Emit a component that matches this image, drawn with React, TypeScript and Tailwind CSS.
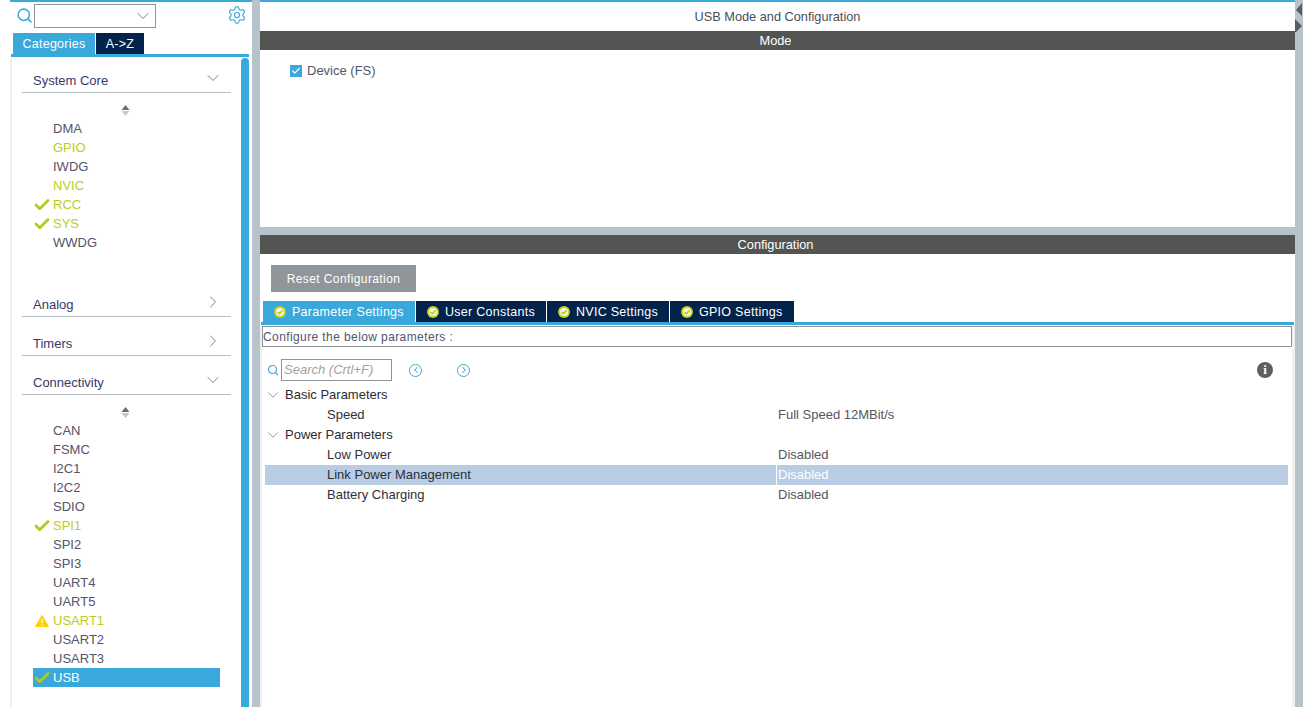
import React from 'react';
import { ChevronDown, ChevronRight, ChevronLeft, Check, Search, Settings } from 'lucide-react';

type Item = { name: string; state?: 'ok' | 'warn'; selected?: boolean };

const coreItems: Item[] = [
  { name: 'DMA' },
  { name: 'GPIO', state: undefined },
  { name: 'IWDG' },
  { name: 'NVIC' },
  { name: 'RCC', state: 'ok' },
  { name: 'SYS', state: 'ok' },
  { name: 'WWDG' },
];

const connItems: Item[] = [
  { name: 'CAN' },
  { name: 'FSMC' },
  { name: 'I2C1' },
  { name: 'I2C2' },
  { name: 'SDIO' },
  { name: 'SPI1', state: 'ok' },
  { name: 'SPI2' },
  { name: 'SPI3' },
  { name: 'UART4' },
  { name: 'UART5' },
  { name: 'USART1', state: 'warn' },
  { name: 'USART2' },
  { name: 'USART3' },
  { name: 'USB', state: 'ok', selected: true },
];

const greenNames = ['GPIO', 'NVIC', 'RCC', 'SYS', 'SPI1', 'USART1'];

const Warn = () => (
  <svg width="14" height="12" viewBox="0 0 15 13">
    <path d="M7.5 0.5 L14.6 12.5 L0.4 12.5 Z" fill="#fdd000" stroke="#fdd000" strokeLinejoin="round" />
    <rect x="6.9" y="4" width="1.3" height="5" fill="#fff" />
    <rect x="6.9" y="10" width="1.3" height="1.3" fill="#fff" />
  </svg>
);

const SortArrows = () => (
  <div className="flex h-[18px] items-center justify-center pr-[13px]">
    <svg width="9" height="11" viewBox="0 0 9 11">
      <path d="M4.5 0 L8.5 5 L0.5 5 Z" fill="#6a6f73" />
      <path d="M4.5 11 L8.5 6 L0.5 6 Z" fill="#c3c7ca" />
    </svg>
  </div>
);

const PeripheralRow = ({ item }: { item: Item }) => {
  const green = greenNames.includes(item.name);
  return (
    <div className={`flex h-[19px] items-center ${item.selected ? 'bg-[#39a9dc] text-white' : green ? 'text-[#bccd22]' : 'text-[#54546a]'}`}>
      <span className="flex w-5 items-center justify-center pr-[3px]">
        {item.state === 'ok' && <Check size={18} strokeWidth={3.6} className="shrink-0 text-[#b5c91c]" />}
        {item.state === 'warn' && <Warn />}
      </span>
      <span className="text-[13px]">{item.name}</span>
    </div>
  );
};

const CategoryHead = ({ title, open, first }: { title: string; open?: boolean; first?: boolean }) => (
  <div className={`flex items-end ${first ? 'h-[36px]' : 'h-[39px]'}`}>
    <div className="flex h-[26px] w-[209px] items-center justify-between border-b border-[#b4bfc6] pl-[11px] pr-[8px] text-[13px] text-[#37396a]">
      <span className="pt-[3px]">{title}</span>
      {open ? (
        <ChevronDown size={20} strokeWidth={1.2} className="mb-[3px] text-[#7a7f84]" />
      ) : (
        <ChevronRight size={20} strokeWidth={1.2} className="mb-[3px] text-[#7a7f84]" />
      )}
    </div>
  </div>
);

const TabIcon = () => (
  <svg width="12" height="12" viewBox="0 0 12 12" className="shrink-0">
    <circle cx="6" cy="6" r="6" fill="#c2d21f" />
    <circle cx="6" cy="6" r="4" fill="#f3f5e2" />
    <path d="M3.6 6 L5.4 7.8 L8.5 4.6" fill="none" stroke="#b3c41a" strokeWidth="1.5" />
  </svg>
);

const tabs = [
  { label: 'Parameter Settings', w: 'w-[152px]', active: true },
  { label: 'User Constants', w: 'w-[130px]' },
  { label: 'NVIC Settings', w: 'w-[122px]' },
  { label: 'GPIO Settings', w: 'w-[124px]' },
];

const TreeGroup = ({ title }: { title: string }) => (
  <div className="flex h-5 items-center text-[#2b2b33]">
    <ChevronDown size={18} strokeWidth={1.1} className="-ml-[1px] mr-[3px] text-[#7a7f84]" />
    <span>{title}</span>
  </div>
);

const TreeRow = ({ name, value, selected }: { name: string; value: string; selected?: boolean }) => (
  <div className={`flex h-5 items-center ${selected ? 'bg-[#b8cde4]' : ''}`}>
    <span className="w-[511px] pl-[62px] text-[#2f2f3a]">{name}</span>
    <span className={`flex h-full items-center pl-[1px] ${selected ? 'border-l border-white text-white' : 'ml-[1px] text-[#55555f]'}`}>{value}</span>
  </div>
);

const CircleArrow = ({ left }: { left?: boolean }) => (
  <span className="flex h-[13px] w-[13px] items-center justify-center rounded-full border-[1.5px] border-[#39a9dc] text-[#39a9dc]">
    {left ? <ChevronLeft size={10} strokeWidth={2.5} /> : <ChevronRight size={10} strokeWidth={2.5} />}
  </span>
);

export default function App() {
  return (
    <div className="flex h-[707px] w-[1315px] overflow-hidden bg-white font-['Liberation_Sans',Arial,sans-serif]">
      {/* left panel */}
      <div className="flex w-[252px] shrink-0 flex-col pl-[10px]">
        <div className="h-[2px] shrink-0 bg-[#39a9dc]" />
        <div className="flex h-[31px] shrink-0 items-start pt-[2px]">
          <Search size={17} strokeWidth={2.2} className="ml-[6px] mt-[3px] shrink-0 text-[#39a9dc]" />
          <div className="ml-[1px] flex h-[24px] w-[122px] shrink-0 items-center justify-end border border-[#8f9396] pr-[2px]">
            <ChevronDown size={20} strokeWidth={1.1} className="text-[#6f7478]" />
          </div>
          <Settings size={20} strokeWidth={1.4} className="ml-[71px] mt-[1px] shrink-0 text-[#39a9dc]" />
        </div>
        <div className="flex h-[21px] shrink-0 pl-[3px] text-[12.5px] tracking-[0.25px] text-white">
          <div className="flex w-[82px] items-center justify-center bg-[#39a9dc] pt-[1px]">Categories</div>
          <div className="ml-[1px] flex w-[48px] items-center justify-center bg-[#03234b] pt-[1px]">A-&gt;Z</div>
        </div>
        <div className="ml-[1px] mr-[3px] h-[3px] shrink-0 bg-[#39a9dc]" />
        <div className="flex min-h-0 flex-1">
          <div className="flex-1 border-l-2 border-[#efefef] pl-[10px]">
            <CategoryHead title="System Core" open first />
            <div className="mt-[8px]"><SortArrows /></div>
            <div className="ml-[11px] mr-[21px]">
              {coreItems.map(i => <PeripheralRow key={i.name} item={i} />)}
            </div>
            <div className="h-[26px]" />
            <CategoryHead title="Analog" />
            <CategoryHead title="Timers" />
            <CategoryHead title="Connectivity" open />
            <div className="mt-[8px]"><SortArrows /></div>
            <div className="ml-[11px] mr-[21px]">
              {connItems.map(i => <PeripheralRow key={i.name} item={i} />)}
            </div>
          </div>
          <div className="mt-[1px] mr-[3px] w-[8px] rounded-t-[4px] bg-[#39a9dc]" />
        </div>
      </div>
      <div className="w-[8px] shrink-0 bg-[#b7c3ca]" />

      {/* main panel */}
      <div className="flex w-[1035px] shrink-0 flex-col">
        <div className="h-[2px] shrink-0 bg-[#39a9dc]" />
        <div className="flex h-[29px] shrink-0 items-center justify-center text-[12.75px] text-[#4d4d55]">USB Mode and Configuration</div>
        <div className="flex h-[19px] shrink-0 items-center justify-center bg-[#535553] pr-[4px] text-[12.75px] text-white">Mode</div>
        <div className="h-[177px] shrink-0 pl-[30px] pt-[11px]">
          <div className="flex items-center text-[13px] text-[#54546a]">
            <span className="flex h-[12px] w-[12px] items-center justify-center bg-[#39a9dc]">
              <Check size={10} strokeWidth={3} className="text-white" />
            </span>
            <span className="ml-[5px]">Device (FS)</span>
          </div>
        </div>
        <div className="h-[8px] shrink-0 bg-[#b7c3ca]" />
        <div className="flex h-[19px] shrink-0 items-center justify-center bg-[#535553] pr-[4px] text-[12.75px] text-white">Configuration</div>
        <div className="flex min-h-0 flex-1 flex-col">
          <div className="ml-[11px] mt-[11px] flex h-[27px] w-[145px] shrink-0 items-center justify-center bg-[#90959a] text-[12px] tracking-[0.4px] text-white">Reset Configuration</div>
          <div className="ml-[3px] mt-[9px] flex h-[21px] shrink-0 gap-[1px] text-[12.5px] tracking-[0.27px] text-white">
            {tabs.map(t => (
              <div key={t.label} className={`flex items-center pl-[11px] ${t.w} ${t.active ? 'bg-[#39a9dc]' : 'bg-[#03234b]'}`}>
                <TabIcon />
                <span className="ml-[6px] pt-[1px]">{t.label}</span>
              </div>
            ))}
          </div>
          <div className="ml-[1px] mr-[1px] h-[3px] shrink-0 bg-[#39a9dc]" />
          <div className="flex min-h-0 flex-1 border-l-2 border-r-[3px] border-[#f0f0f0]">
            <div className="min-w-0 flex-1 text-[13px]">
              <div className="mt-[1px] flex h-[21px] items-center border border-[#8e9599] text-[12px] tracking-[0.4px] text-[#54546a]">Configure the below parameters :</div>
              <div className="mt-[12px] flex h-[22px] items-center">
                <Search size={12} strokeWidth={2.4} className="ml-[5px] text-[#39a9dc]" />
                <div className="ml-[2px] flex h-[22px] w-[111px] items-center border border-[#8e9599] pl-[2px] italic text-[#a2a2a2]">Search (Crtl+F)</div>
                <span className="ml-[17px]"><CircleArrow left /></span>
                <span className="ml-[35px]"><CircleArrow /></span>
                <span className="ml-auto mr-[19px] flex h-4 w-4 items-center justify-center rounded-full bg-[#5f5f5f] font-['Liberation_Serif',serif] text-[13px] font-bold text-white">i</span>
              </div>
              <div className="ml-[3px] mr-[4px] mt-[4px]">
                <TreeGroup title="Basic Parameters" />
                <TreeRow name="Speed" value="Full Speed 12MBit/s" />
                <TreeGroup title="Power Parameters" />
                <TreeRow name="Low Power" value="Disabled" />
                <TreeRow name="Link Power Management" value="Disabled" selected />
                <TreeRow name="Battery Charging" value="Disabled" />
              </div>
            </div>
          </div>
        </div>
      </div>
      <div className="relative w-[8px] shrink-0 bg-[#b7c3ca]">
        <svg width="8" height="30" viewBox="0 0 8 30" className="absolute left-0 top-[2px]">
          <path d="M7 1 L7 14 L1 8 Z" fill="#5a5d5f" />
          <path d="M0 17 L0 31 L7 24 Z" fill="#5a5d5f" />
        </svg>
      </div>
      <div className="flex-1" />
    </div>
  );
}
